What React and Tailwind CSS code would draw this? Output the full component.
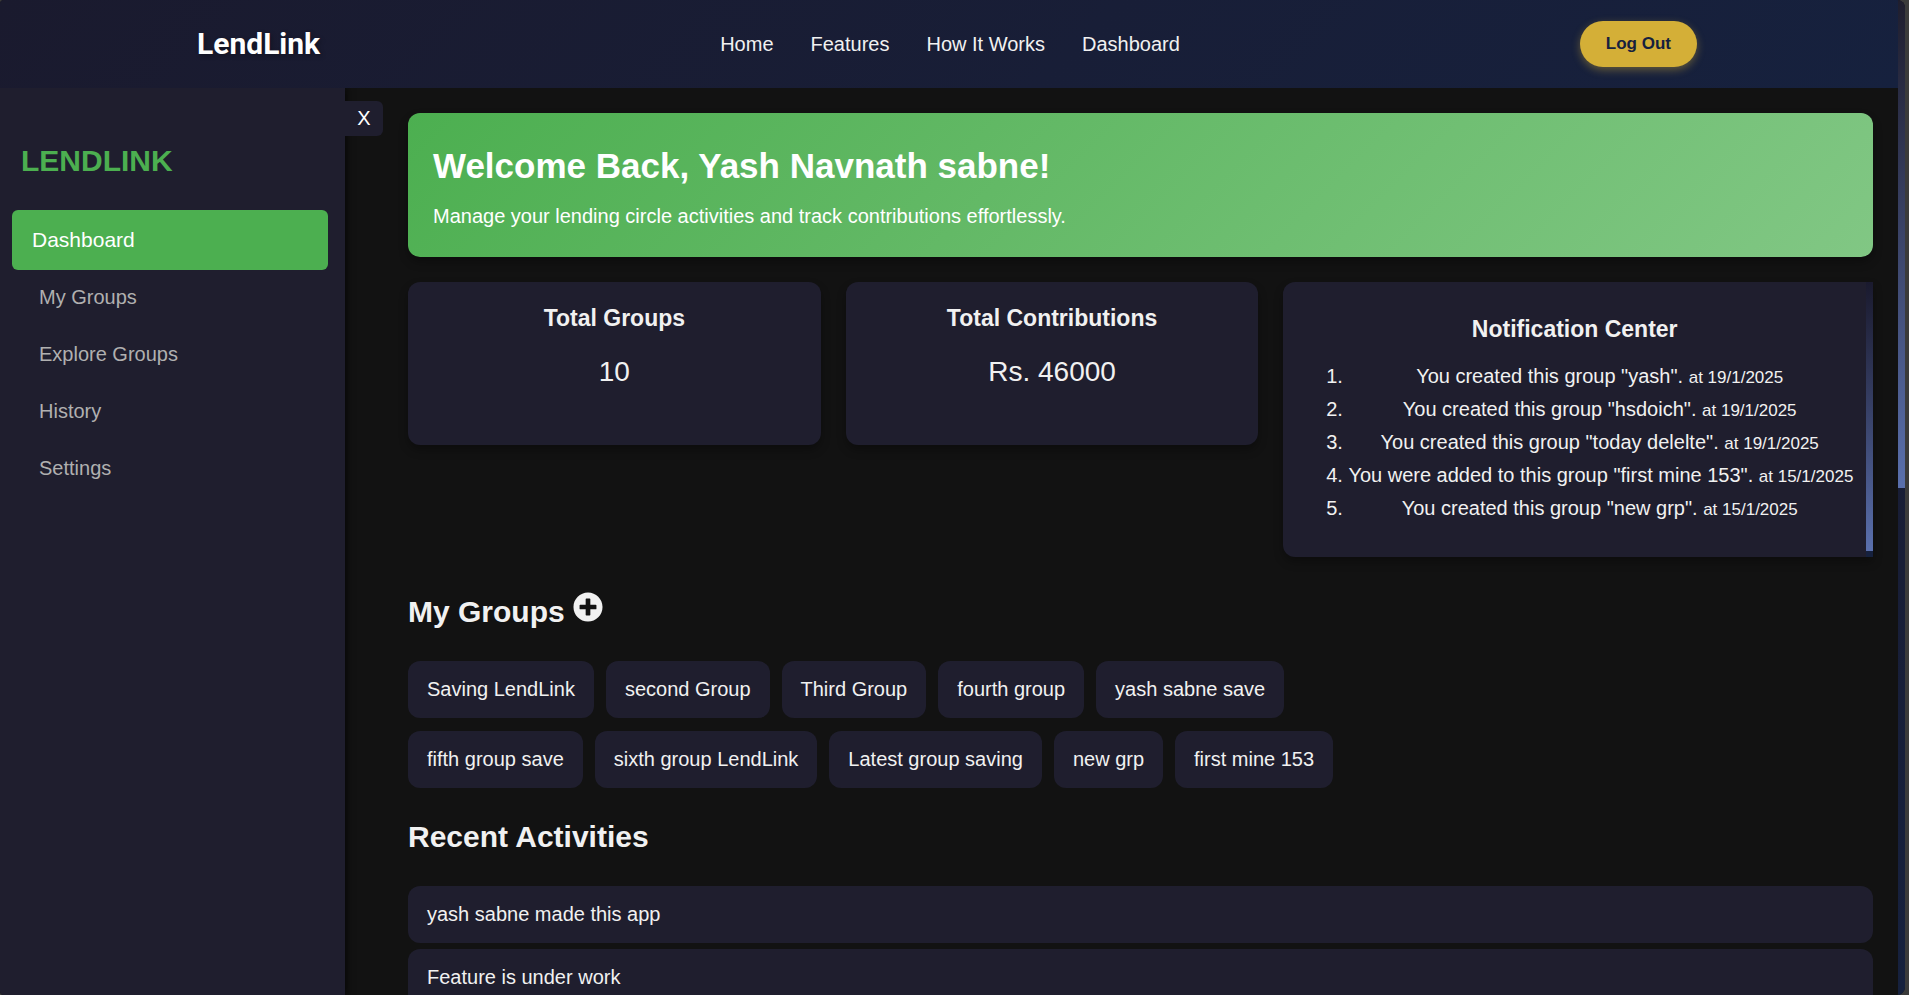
import { FaPlusCircle } from "react-icons/fa";

const navLinks = ["Home", "Features", "How It Works", "Dashboard"];
const menu = ["Dashboard", "My Groups", "Explore Groups", "History", "Settings"];
const notifications = [
  { text: 'You created this group "yash".', date: "19/1/2025" },
  { text: 'You created this group "hsdoich".', date: "19/1/2025" },
  { text: 'You created this group "today delelte".', date: "19/1/2025" },
  { text: 'You were added to this group "first mine 153".', date: "15/1/2025" },
  { text: 'You created this group "new grp".', date: "15/1/2025" },
];
const groups = [
  "Saving LendLink",
  "second Group",
  "Third Group",
  "fourth group",
  "yash sabne save",
  "fifth group save",
  "sixth group LendLink",
  "Latest group saving",
  "new grp",
  "first mine 153",
];
const activities = ["yash sabne made this app", "Feature is under work"];

function Header() {
  return (
    <header className="relative z-20 flex h-[88px] shrink-0 items-center bg-linear-135 from-[#1a1a2e] to-[#16213e] pr-1">
      <div className="mx-auto flex w-full max-w-[1500px] items-center justify-between">
        <a href="#home" className="font-['Roboto',sans-serif] text-[30px] leading-9 font-bold text-white [text-shadow:2px_2px_5px_rgba(0,0,0,0.3)]">
          LendLink
        </a>
        <nav className="flex gap-[37px]">
          {navLinks.map((label) => (
            <a key={label} href={"#" + label} className="text-[20px] leading-6 text-[#f1f1f1]">
              {label}
            </a>
          ))}
        </nav>
        <button
          type="button"
          className="h-[46px] rounded-full bg-[#d4af37] px-[26px] text-[17px] font-bold text-[#16213e] shadow-[0_3px_8px_rgba(212,175,55,0.4)]"
        >
          Log Out
        </button>
      </div>
    </header>
  );
}

function Sidebar() {
  return (
    <aside className="relative z-10 w-[345px] shrink-0 bg-[#1f1e2e] px-[21px] pt-[49px] shadow-[3px_0_6px_rgba(0,0,0,0.5)]">
      <h2 className="text-[30px] leading-[48px] font-bold text-[#4caf50]">LENDLINK</h2>
      <ul className="mt-[26px] w-[298px]">
        {menu.map((label, i) =>
          i === 0 ? (
            <li key={label} className="-mx-[9px] -mt-px -mb-[2px]">
              <a
                href={"#" + label}
                aria-current="page"
                className="flex h-[60px] items-center rounded-md bg-[#4caf50] pl-5 text-[21px] text-white"
              >
                {label}
              </a>
            </li>
          ) : (
            <li key={label}>
              <a href={"#" + label} className="flex h-[57px] items-center pl-[18px] text-[20px] text-[#b0b0b0]">
                {label}
              </a>
            </li>
          ),
        )}
      </ul>
      <button
        type="button"
        aria-label="Close sidebar"
        className="absolute top-[13px] left-full h-[35px] w-[38px] rounded-r-md bg-[#1f1e2e] pb-[2px] text-[20px] leading-none text-white"
      >
        X
      </button>
    </aside>
  );
}

function StatCard({ title, value }) {
  return (
    <section className="min-h-[163px] self-start rounded-xl bg-[#1f1e2e] pt-[18px] text-center shadow-[0_5px_10px_rgba(0,0,0,0.3)]">
      <h3 className="text-[23px] leading-9 font-bold">{title}</h3>
      <p className="mt-[13px] text-[28px] leading-[45px]">{value}</p>
    </section>
  );
}

function Notifications() {
  return (
    <section className="flex h-[275px] rounded-l-xl bg-[#1f1e2e] shadow-[0_5px_10px_rgba(0,0,0,0.3)]">
      <div className="min-w-0 flex-1 px-[15px] pt-[29px] text-center">
        <h3 className="text-[23px] leading-9 font-bold">Notification Center</h3>
        <ol className="mt-[13px] list-decimal pl-[50px] text-[20px] leading-[33px] whitespace-nowrap">
          {notifications.map((n) => (
            <li key={n.text}>
              {n.text} <small className="text-[17px] leading-none">at {n.date}</small>
            </li>
          ))}
        </ol>
      </div>
      <div className="flex w-[7px] shrink-0 flex-col bg-[#16213e] pb-[6px]">
        <div className="flex-1 bg-linear-to-b from-[#1a1a2e] to-[#5a70ad]" />
      </div>
    </section>
  );
}

export default function App() {
  return (
    <div className="flex h-screen overflow-hidden bg-[#3b3b3b] pr-1 font-['Liberation_Sans',Arial,sans-serif] text-[#f1f1f1]">
      <div className="flex min-w-0 flex-1 overflow-hidden rounded-l-sm rounded-r-lg bg-[#121212]">
        <div className="flex min-w-0 flex-1 flex-col">
          <Header />
          <div className="flex min-h-0 flex-1">
            <Sidebar />
            <main className="min-w-0 flex-1 overflow-hidden pt-[25px] pr-[25px] pl-[63px]">
              <section className="rounded-xl bg-linear-135 from-[#4caf50] to-[#81c784] p-[25px] text-white shadow-[0_5px_10px_rgba(0,0,0,0.3)]">
                <h1 className="text-[35px] leading-[56px] font-bold">Welcome Back, Yash Navnath sabne!</h1>
                <p className="mt-[6px] text-[20px] leading-8">
                  Manage your lending circle activities and track contributions effortlessly.
                </p>
              </section>
              <div className="mt-[25px] grid grid-cols-[minmax(0,7fr)_minmax(0,7fr)_minmax(0,10fr)] gap-[25px]">
                <StatCard title="Total Groups" value="10" />
                <StatCard title="Total Contributions" value="Rs. 46000" />
                <Notifications />
              </div>
              <section className="mt-[31px]">
                <h2 className="flex items-baseline gap-2 text-[30px] leading-[48px] font-bold">
                  My Groups
                  <button type="button" aria-label="Add group">
                    <FaPlusCircle className="inline-block size-[30px] align-baseline" />
                  </button>
                </h2>
                <ul className="mt-[25px] flex max-w-[1000px] flex-wrap gap-x-3 gap-y-[13px]">
                  {groups.map((name) => (
                    <li key={name} className="rounded-xl bg-[#1f1e2e] px-[19px] py-[12px] text-[20px] leading-[33px]">
                      {name}
                    </li>
                  ))}
                </ul>
              </section>
              <section className="mt-[25px]">
                <h2 className="text-[30px] leading-[48px] font-bold">Recent Activities</h2>
                <ul className="mt-[25px] flex flex-col gap-[6px]">
                  {activities.map((text) => (
                    <li key={text} className="rounded-xl bg-[#1f1e2e] px-[19px] py-[12px] text-[20px] leading-[33px]">
                      {text}
                    </li>
                  ))}
                </ul>
              </section>
            </main>
          </div>
        </div>
        <div className="w-[7px] shrink-0 bg-linear-to-b from-[#1a1a2e] to-[#16213e]">
          <div className="h-[49%] bg-linear-to-b from-[#1f1e2e] to-[#5a70ad]" />
        </div>
      </div>
    </div>
  );
}
